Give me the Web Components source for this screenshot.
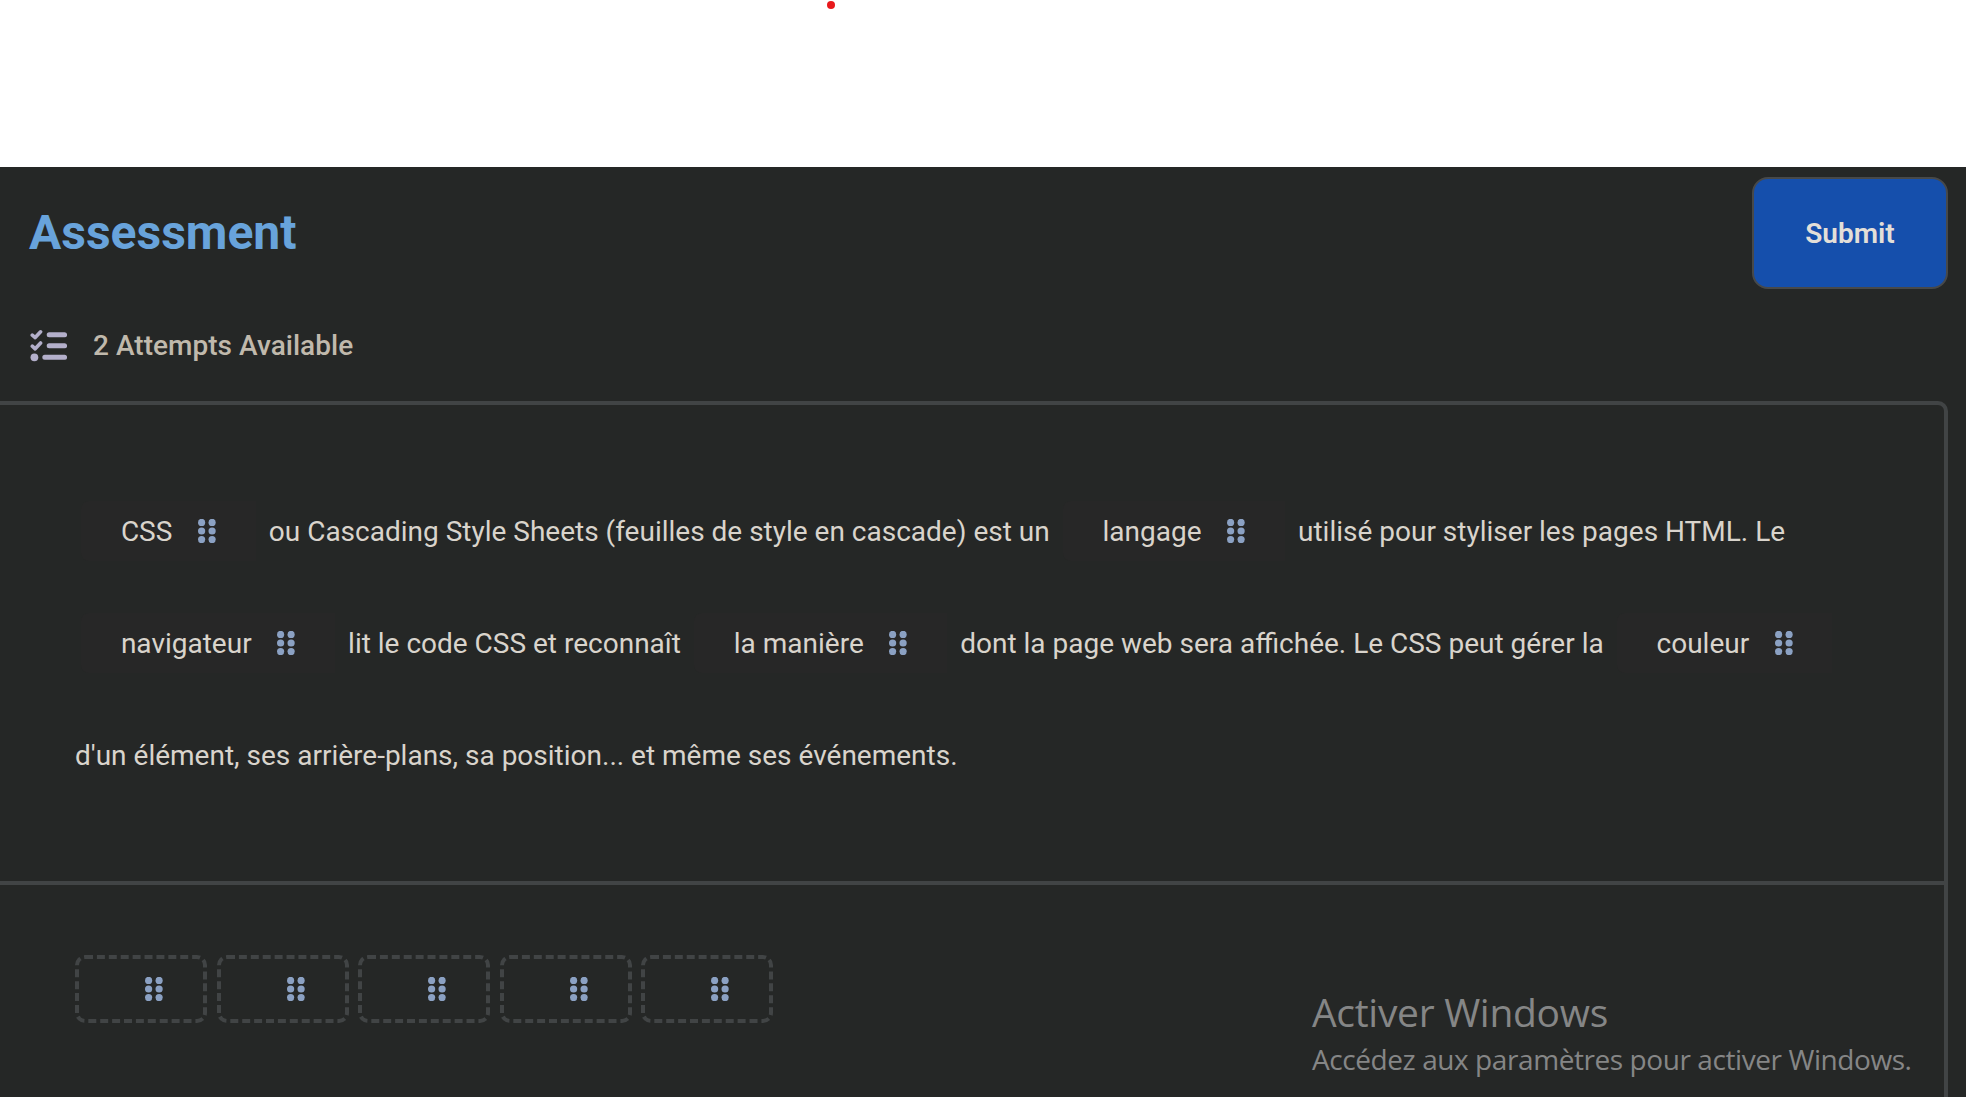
<!DOCTYPE html>
<html lang="fr">
<head>
<meta charset="utf-8">
<title>Assessment</title>
<style>
html,body{margin:0;height:100%;overflow:hidden;background:#fff}
body{font-family:Roboto,"Liberation Sans",sans-serif}
</style>
</head>
<body>
<assessment-page></assessment-page>
<script>
const define = (name, html) => customElements.define(name, class extends HTMLElement {
  constructor() {
    super();
    this.attachShadow({ mode: 'open' }).innerHTML = html;
  }
});

define('drag-dots', `
<style>:host{display:block;width:18px;height:24px;flex:none;white-space:normal;line-height:0}svg{display:block}</style>
<svg width="18" height="24" viewBox="0 0 18 24" fill="#8ba1c3">
  <circle cx="3.6" cy="3.4" r="3.6"/><circle cx="14.1" cy="3.4" r="3.6"/>
  <circle cx="3.6" cy="12" r="3.6"/><circle cx="14.1" cy="12" r="3.6"/>
  <circle cx="3.6" cy="20.6" r="3.6"/><circle cx="14.1" cy="20.6" r="3.6"/>
</svg>`);

define('word-chip', `
<style>
:host{display:flex;align-items:center;flex:none;height:60px;box-sizing:border-box;margin:-2px 6.3px 0;padding:2px 39.8px 0 39.6px;background:#272727;border-radius:8px 0 0 8px}
drag-dots{margin:-2px 0 0 25.4px}
</style><slot></slot><drag-dots></drag-dots>`);

define('empty-slot', `
<style>
:host{display:flex;align-items:center;flex:none;width:132px;height:68px;box-sizing:border-box;border:4px dashed #414445;border-radius:10px;padding-left:66px}
</style><drag-dots></drag-dots>`);

define('text-line', `
<style>
:host{display:flex;align-items:center;height:112px;white-space:pre;font-size:28px;line-height:56px;color:#d9d4cc}
</style><slot></slot>`);

define('submit-button', `
<style>
:host{display:block;flex:none}
button{display:block;width:196px;height:112px;box-sizing:border-box;border:2px solid #47494a;border-radius:16px;background:#154fac;color:#e3dfd8;font:600 28px Roboto,"Liberation Sans",sans-serif;padding:0}
</style><button><slot></slot></button>`);

define('attempts-label', `
<style>
:host{display:flex;align-items:center;height:40px;font-size:28px;font-weight:500;line-height:40px;color:#c0b9ac;letter-spacing:.03px}
svg{display:block;margin-right:26px}
</style>
<svg width="37" height="34" viewBox="0 0 37 34" fill="none" stroke="#b3afca" stroke-linecap="round">
  <path stroke-width="3.6" stroke-linejoin="round" d="M2.3 6.2 5.2 8.6 10.6 2.8M2.3 17.2 5.2 19.8 10.6 14"/>
  <path stroke-width="5" d="M19.2 5.8H34.6M19.2 16.8H34.6M14.8 28.3H34.6"/>
  <circle cx="4.4" cy="28.3" r="3.9" fill="#b3afca" stroke="none"/>
</svg><slot></slot>`);

define('top-strip', `
<style>
:host{display:block;height:167px;background:#fff;overflow:hidden}
i{display:block;width:8px;height:8px;border-radius:50%;background:#e8191c;margin:1px 0 0 827px}
</style><i></i>`);

define('windows-notice', `
<style>
:host{position:absolute;left:1312px;top:985px;color:#858686;font-family:"Open Sans","Noto Sans",sans-serif;white-space:nowrap}
b,span{display:block;font-weight:400}
b{font-size:39px;line-height:54px;letter-spacing:-.3px}
span{font-size:28px;line-height:40px;letter-spacing:-.42px}
</style><b><slot name="title"></slot></b><span><slot></slot></span>`);

define('assessment-page', `
<style>
:host{display:flex;flex-direction:column;height:1097px;overflow:hidden;position:relative;background:#252726}
header{display:flex;justify-content:space-between;align-items:center;margin:10px 18px 0 29px;height:112px}
h1{margin:0;font-size:48px;line-height:56px;font-weight:700;color:#68a3db}
attempts-label{margin:37px 0 35px 30px}
main{flex:1;margin-right:18px;border:solid #414445;border-width:4px 4px 0 0;border-radius:0 10px 0 0}
section{padding:71px 0 69px 75px;border-bottom:4px solid #414445}
.bank{display:flex;gap:9.6px;padding:70px 0 0 75px}
</style>
<top-strip></top-strip>
<header><h1>Assessment</h1><submit-button>Submit</submit-button></header>
<attempts-label>2 Attempts Available</attempts-label>
<main>
<section>
<text-line><word-chip>CSS</word-chip><span> ou Cascading Style Sheets (feuilles de style en cascade) est un </span><word-chip>langage</word-chip><span> utilisé pour styliser les pages HTML. Le</span></text-line>
<text-line><word-chip>navigateur</word-chip><span> lit le code CSS et reconnaît </span><word-chip>la manière</word-chip><span> dont la page web sera affichée. Le CSS peut gérer la </span><word-chip>couleur</word-chip></text-line>
<text-line><span>d'un élément, ses arrière-plans, sa position... et même ses événements.</span></text-line>
</section>
<div class="bank"><empty-slot></empty-slot><empty-slot></empty-slot><empty-slot></empty-slot><empty-slot></empty-slot><empty-slot></empty-slot></div>
</main>
<windows-notice><span slot="title">Activer Windows</span>Accédez aux paramètres pour activer Windows.</windows-notice>`);
</script>
</body>
</html>
